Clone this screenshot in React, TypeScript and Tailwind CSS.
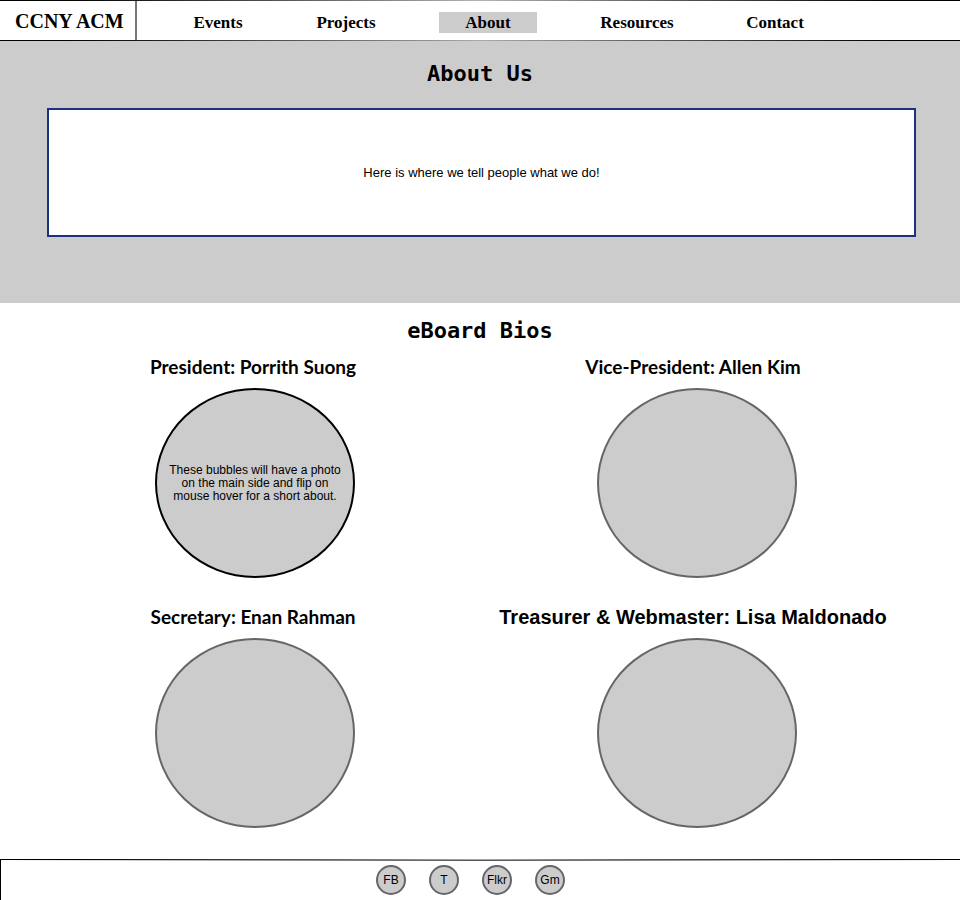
const navItems = [
  { label: "Events", spacing: "ml-8" },
  { label: "Projects", spacing: "ml-[30px]" },
  { label: "About", spacing: "ml-11", current: true },
  { label: "Resources", spacing: "ml-[51px]" },
  { label: "Contact", spacing: "ml-10" },
];

const members = [
  {
    title: "President: Porrith Suong",
    about: "These bubbles will have a photo on the main side and flip on mouse hover for a short about.",
    font: "font-[Lato,sans-serif] text-[19px] pr-1",
    border: "border-black",
  },
  {
    title: "Vice-President: Allen Kim",
    font: "font-[Lato,sans-serif] text-[19px] pr-2",
    border: "border-[#666]",
  },
  {
    title: "Secretary: Enan Rahman",
    font: "font-[Lato,sans-serif] text-[19px] pr-1",
    border: "border-[#666]",
  },
  {
    title: "Treasurer & Webmaster: Lisa Maldonado",
    font: "text-[20px] pr-2",
    border: "border-[#666]",
  },
];

const socials = [
  { label: "FB", name: "Facebook" },
  { label: "T", name: "Twitter" },
  { label: "Flkr", name: "Flickr" },
  { label: "Gm", name: "Gmail" },
];

function Header() {
  return (
    <header className="font-['Liberation_Serif',serif] font-bold">
      <div className="h-px bg-linear-to-r from-black via-[#b3b3b3] to-black" />
      <div className="flex h-[39px]">
        <a href="#home" className="w-[137px] border-r-2 border-[#777] pl-[15px] text-[20px] leading-[40px] whitespace-nowrap">
          CCNY ACM
        </a>
        <nav className="flex items-center pt-1">
          {navItems.map((item) => (
            <a
              key={item.label}
              href={`#${item.label.toLowerCase()}`}
              aria-current={item.current ? "page" : undefined}
              className={`${item.spacing} ${item.current ? "bg-[#ccc]" : ""} w-[98px] text-center text-[17px] leading-[21px]`}
            >
              {item.label}
            </a>
          ))}
        </nav>
      </div>
      <div className="h-px bg-linear-to-r from-black via-[#aaa] to-black" />
    </header>
  );
}

function SectionTitle({ children }: { children: string }) {
  return (
    <h2 className="text-center font-['DejaVu_Sans_Mono',monospace] text-[22px] leading-[26px] font-bold">{children}</h2>
  );
}

export default function App() {
  return (
    <div className="flex min-h-screen flex-col bg-white font-['Liberation_Sans',sans-serif] text-black">
      <Header />
      <main className="flex-1">
        <section className="bg-[#ccc] pt-5 pb-[66px]">
          <SectionTitle>About Us</SectionTitle>
          <div className="mt-[21px] mr-11 ml-[47px] flex min-h-[129px] items-center justify-center border-2 border-[#1b3281] bg-white p-4 text-[13px]">
            <p>Here is where we tell people what we do!</p>
          </div>
        </section>
        <section className="pt-[15px]">
          <SectionTitle>eBoard Bios</SectionTitle>
          <div className="mt-[11px] grid grid-cols-2 gap-y-[27px] pr-[42px] pl-[34px]">
            {members.map((member) => (
              <article key={member.title} className="flex flex-col items-center gap-[9px]">
                <h3 className={`${member.font} leading-[24px] font-bold whitespace-nowrap`}>{member.title}</h3>
                <div
                  className={`${member.border} flex h-[190px] w-[200px] items-center justify-center rounded-[50%] border-2 bg-[#ccc] text-center text-[12px] leading-[13px]`}
                >
                  {member.about && <p className="w-[176px]">{member.about}</p>}
                </div>
              </article>
            ))}
          </div>
        </section>
      </main>
      <footer className="h-[41px] border-l border-black">
        <div className="h-px bg-linear-to-r from-black via-[#aaa] to-black" />
        <div className="h-px bg-linear-to-r from-white via-[#555] to-white" />
        <nav aria-label="Social" className="flex justify-center gap-[23px] pt-1 pr-5">
          {socials.map((social) => (
            <a
              key={social.label}
              href={`#${social.name.toLowerCase()}`}
              title={social.name}
              className="flex size-[30px] items-center justify-center rounded-full border-2 border-[#666] bg-[#ccc] text-[12px]"
            >
              {social.label}
            </a>
          ))}
        </nav>
      </footer>
    </div>
  );
}
